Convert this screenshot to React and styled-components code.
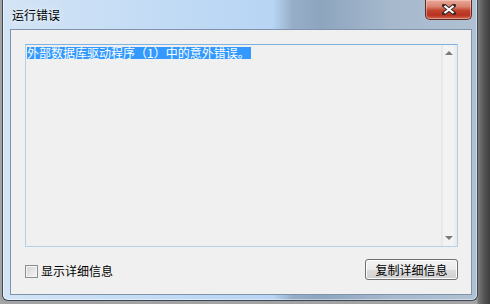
import React from "react";
import styled, { createGlobalStyle } from "styled-components";

const GlobalStyle = createGlobalStyle`
  html, body {
    margin: 0;
    padding: 0;
  }
  body {
    width: 490px;
    height: 304px;
    overflow: hidden;
    font-family: "Noto Sans CJK SC", "Liberation Sans", sans-serif;
    background: linear-gradient(
      to right,
      #a3a3a3 0px,
      #a3a3a3 477px,
      #7a7a7a 478px,
      #555555 484px,
      #3e3e3e 490px
    );
  }
`;

const Page = styled.div`
  display: flex;
  padding-left: 2px;
`;

const Window = styled.div`
  width: 476px;
  height: 301px;
  box-sizing: border-box;
  border: 1px solid #3b4756;
  border-top: none;
  border-radius: 0 0 6px 6px;
  display: flex;
  flex-direction: column;
  background: linear-gradient(
    to right,
    #d3e4f5 0%,
    #c4dcf5 30%,
    #b7d5f4 57%,
    #97aec8 61%,
    #8ea5bf 67%,
    #a6b9cd 82%,
    #b0c1d3 100%
  );
  box-shadow: inset 1px 0 0 rgba(255, 255, 255, 0.55),
    inset -1px 0 0 rgba(255, 255, 255, 0.45),
    inset 0 -1px 0 rgba(255, 255, 255, 0.45);
`;

const TitleBar = styled.div`
  height: 29px;
  display: flex;
  justify-content: space-between;
  align-items: flex-start;
  padding-left: 9px;
  padding-right: 5px;
`;

const Title = styled.div`
  margin-top: 7px;
  font-size: 12px;
  line-height: 16px;
  color: #000;
  text-shadow: 0 0 6px rgba(255, 255, 255, 0.9);
`;

const CloseButton = styled.div`
  width: 47px;
  height: 20px;
  box-sizing: border-box;
  border: 1px solid #5e2a24;
  border-top: none;
  border-radius: 0 0 5px 5px;
  background: linear-gradient(
    to bottom,
    #e9a999 0%,
    #d98270 35%,
    #c0442f 55%,
    #b8321f 80%,
    #cf6a52 100%
  );
  box-shadow: inset 0 0 0 1px rgba(255, 220, 210, 0.45);
  display: flex;
  align-items: center;
  justify-content: center;
`;

const Client = styled.div`
  flex: 1;
  margin: 0 5px 5px 7px;
  border: 1px solid #7f93aa;
  background: #f0f0f0;
  display: flex;
  flex-direction: column;
  padding: 14px 13px 12px 14px;
`;

const TextBox = styled.div`
  height: 203px;
  box-sizing: border-box;
  border: 1px solid #b5cfe7;
  border-top-color: #7eb0e0;
  display: flex;
  background: #f0f0f0;
`;

const TextArea = styled.div`
  flex: 1;
  padding: 2px 1px;
`;

const Selected = styled.div`
  width: fit-content;
  height: 12px;
  line-height: 12px;
  font-size: 12px;
  color: #fff;
  background: #3399ff;
  white-space: nowrap;
  padding-right: 1px;
`;

const ScrollBar = styled.div`
  width: 16px;
  display: flex;
  flex-direction: column;
  justify-content: space-between;
  align-items: center;
  background: linear-gradient(
    to right,
    #e4e4e4 0px,
    #f3f3f3 3px,
    #f3f3f3 12px,
    #e8e8e8 16px
  );
  padding: 6px 0 6px;
`;

const Arrow = styled.div`
  width: 0;
  height: 0;
  border-left: 4px solid transparent;
  border-right: 4px solid transparent;
  ${(p) =>
    p.$down
      ? "border-top: 4px solid #7a7a7a;"
      : "border-bottom: 4px solid #7a7a7a;"}
`;

const Footer = styled.div`
  margin-top: 12px;
  display: flex;
  justify-content: space-between;
  align-items: center;
`;

const CheckLabel = styled.label`
  display: flex;
  align-items: center;
  gap: 3px;
  font-size: 12px;
  line-height: 14px;
  color: #000;
  margin-top: 3px;
`;

const CheckBox = styled.span`
  width: 13px;
  height: 13px;
  box-sizing: border-box;
  border: 1px solid #8e8f8f;
  background: linear-gradient(135deg, #d2d2d2 0%, #e9e9e9 60%, #f6f6f6 100%);
  box-shadow: inset 0 0 0 1px #f4f4f4;
`;

const Button = styled.div`
  width: 93px;
  height: 21px;
  box-sizing: border-box;
  border: 1px solid #707070;
  border-radius: 3px;
  background: linear-gradient(
    to bottom,
    #f2f2f2 0%,
    #ebebeb 50%,
    #dddddd 51%,
    #cfcfcf 100%
  );
  box-shadow: inset 0 0 0 1px #fcfcfc;
  font-size: 12px;
  line-height: 19px;
  text-align: center;
  color: #000;
`;

export default function App() {
  return (
    <>
      <GlobalStyle />
      <Page>
        <Window>
          <TitleBar>
            <Title>运行错误</Title>
            <CloseButton>
              <svg width="14" height="11" viewBox="0 0 14 11">
                <path
                  d="M2 1.5 L12 9.5 M12 1.5 L2 9.5"
                  stroke="#3a2a28"
                  strokeWidth="4"
                  strokeLinecap="round"
                />
                <path
                  d="M2.5 2 L11.5 9 M11.5 2 L2.5 9"
                  stroke="#ffffff"
                  strokeWidth="2.2"
                />
              </svg>
            </CloseButton>
          </TitleBar>
          <Client>
            <TextBox>
              <TextArea>
                <Selected>外部数据库驱动程序（1）中的意外错误。</Selected>
              </TextArea>
              <ScrollBar>
                <Arrow />
                <Arrow $down />
              </ScrollBar>
            </TextBox>
            <Footer>
              <CheckLabel>
                <CheckBox />
                显示详细信息
              </CheckLabel>
              <Button>复制详细信息</Button>
            </Footer>
          </Client>
        </Window>
      </Page>
    </>
  );
}
